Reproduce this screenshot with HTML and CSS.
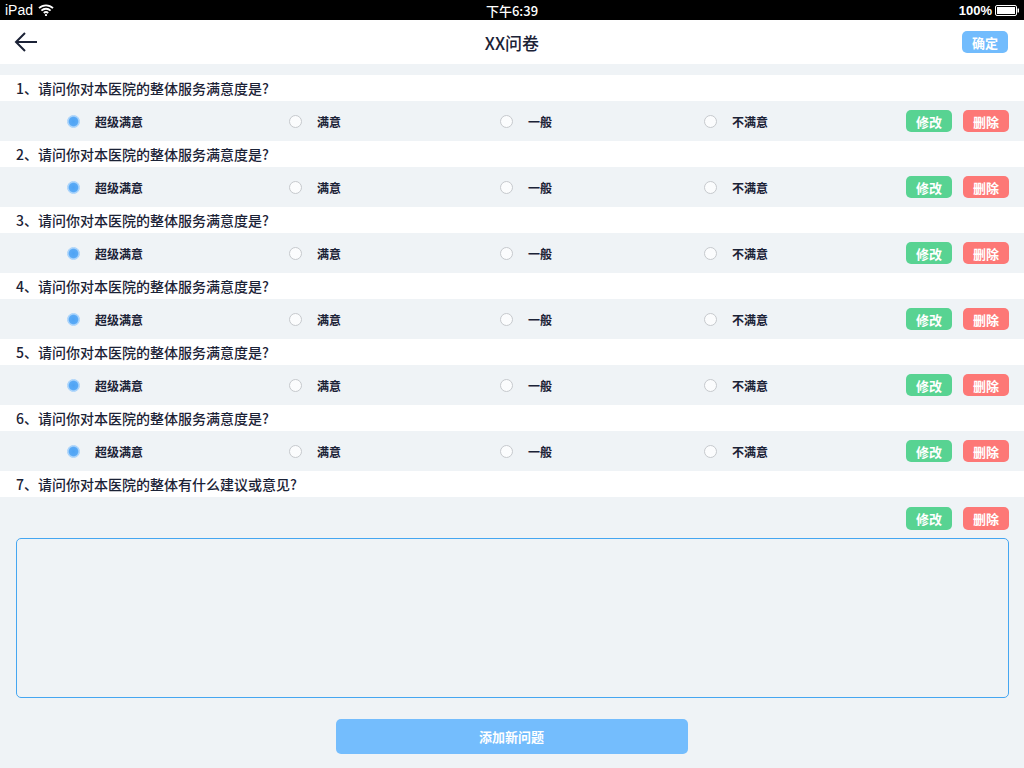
FILE: index.html
```html
<!DOCTYPE html>
<html lang="zh-CN">
<head>
    <meta charset="UTF-8">
    <meta name="viewport" content="width=device-width, initial-scale=1.0">
    <title>XX问卷</title>
    <link rel="stylesheet" href="styles.css">
</head>
<body>
    <div class="status-bar">
        <div class="status-left">
            <span>iPad</span>
            <svg class="wifi" width="16" height="12" viewBox="0 0 16 12">
                <path d="M1 4.2 A10 10 0 0 1 15 4.2" fill="none" stroke="#fff" stroke-width="1.8"/>
                <path d="M3.4 6.6 A6.6 6.6 0 0 1 12.6 6.6" fill="none" stroke="#fff" stroke-width="1.8"/>
                <path d="M5.8 9 A3.2 3.2 0 0 1 10.2 9" fill="none" stroke="#fff" stroke-width="1.8"/>
                <circle cx="8" cy="11" r="1.1" fill="#fff"/>
            </svg>
        </div>
        <div class="status-time">下午6:39</div>
        <div class="status-right">
            <span>100%</span>
            <svg width="25" height="11" viewBox="0 0 25 11">
                <rect x="0.5" y="0.5" width="21" height="10" rx="1.5" fill="none" stroke="#fff"/>
                <rect x="2" y="2" width="18" height="7" fill="#fff"/>
                <rect x="22.5" y="3.5" width="1.5" height="4" fill="#fff"/>
            </svg>
        </div>
    </div>

    <div class="nav-bar">
        <div class="nav-left">
            <svg width="24" height="20" viewBox="0 0 24 20">
                <path d="M23 10 H2 M11 1 L2 10 L11 19" fill="none" stroke="#1b2236" stroke-width="2"/>
            </svg>
        </div>
        <div class="nav-title">XX问卷</div>
        <div class="nav-right">
            <button class="btn btn-blue">确定</button>
        </div>
    </div>

    <div class="spacer"></div>

    <div id="questions"></div>

    <div class="q-title">7、请问你对本医院的整体有什么建议或意见?</div>
    <div class="q-body">
        <div class="q-actions">
            <button class="btn btn-green">修改</button>
            <button class="btn btn-red">删除</button>
        </div>
        <textarea class="answer"></textarea>
        <div class="add-wrap">
            <button class="add-btn">添加新问题</button>
        </div>
    </div>

    <script>
        // 生成 1-6 题
        const options = ['超级满意', '满意', '一般', '不满意'];
        const list = document.getElementById('questions');
        let html = '';
        for (let i = 1; i <= 6; i++) {
            html += `<div class="q-title">${i}、请问你对本医院的整体服务满意度是?</div>`;
            html += '<div class="q-options">';
            options.forEach((label, idx) => {
                html += `<div class="option"><span class="radio ${idx === 0 ? 'checked' : ''}"></span><span class="label">${label}</span></div>`;
            });
            html += '<div class="q-actions"><button class="btn btn-green">修改</button><button class="btn btn-red">删除</button></div>';
            html += '</div>';
        }
        list.innerHTML = html;
    </script>
</body>
</html>
```

FILE: styles.css
```css
body {
    margin: 0;
    width: 1024px;
    height: 768px;
    overflow: hidden;
    background: #eff3f6;
    font-family: "Noto Sans CJK SC", "Noto Sans", sans-serif;
    color: #1b2236;
}

button {
    font-family: inherit;
    border: none;
    cursor: pointer;
}

/* 状态栏 */
.status-bar {
    height: 20px;
    background: #000;
    color: #fff;
    display: grid;
    grid-template-columns: 1fr auto 1fr;
    align-items: center;
    font-family: "Liberation Sans", "Noto Sans CJK SC", sans-serif;
    font-size: 14px;
}

.status-left {
    display: flex;
    align-items: center;
    gap: 5px;
    padding-left: 5px;
}

.status-time {
    font-family: "Noto Sans CJK SC", sans-serif;
    font-size: 13px;
    font-weight: 500;
}

.status-right {
    display: flex;
    justify-content: flex-end;
    align-items: center;
    gap: 3px;
    padding-right: 4px;
    font-size: 13px;
    font-weight: bold;
}

/* 导航栏 */
.nav-bar {
    height: 44px;
    background: #fff;
    display: grid;
    grid-template-columns: 1fr auto 1fr;
    align-items: center;
}

.nav-left {
    padding-left: 14px;
    display: flex;
}

.nav-title {
    font-size: 17px;
    font-weight: 500;
}

.nav-right {
    display: flex;
    justify-content: flex-end;
    padding-right: 16px;
}

.spacer {
    height: 11px;
}

/* 按钮 */
.btn {
    width: 46px;
    height: 22px;
    border-radius: 5px;
    color: #fff;
    font-size: 13px;
    font-weight: bold;
    padding: 0;
}

.btn-blue {
    background: #72bcfd;
}

.btn-green {
    background: #58d392;
}

.btn-red {
    background: #fd7876;
}

/* 问题 */
.q-title {
    height: 26px;
    background: #fff;
    padding-left: 16px;
    display: flex;
    align-items: center;
    font-size: 14px;
    font-weight: 500;
}

.q-options {
    height: 40px;
    display: flex;
    align-items: center;
    padding-left: 67px;
}

.option {
    display: flex;
    align-items: center;
    gap: 15px;
    font-size: 12px;
    font-weight: bold;
}

.option:nth-child(1) { width: 222px; }
.option:nth-child(2) { width: 211px; }
.option:nth-child(3) { width: 204px; }

.radio {
    width: 11px;
    height: 11px;
    border-radius: 50%;
    border: 1px solid #c6c9cd;
    background: #fbfcfd;
}

.radio.checked {
    border-color: #a7d2fb;
    background: radial-gradient(circle, #4ea3f4 0, #5aaaf6 55%, #b6dafc 70%);
}

.q-actions {
    margin-left: auto;
    display: flex;
    gap: 11px;
    padding-right: 15px;
}

.q-body .q-actions {
    justify-content: flex-end;
    padding-top: 10px;
    height: 23px;
}

.q-body .btn {
    height: 23px;
}

.answer {
    display: block;
    box-sizing: border-box;
    width: 993px;
    height: 160px;
    margin: 8px 0 0 16px;
    border: 1px solid #45a6f1;
    border-radius: 5px;
    background: #eff3f6;
    resize: none;
    outline: none;
}

.add-wrap {
    display: flex;
    justify-content: center;
    padding-top: 21px;
}

.add-btn {
    width: 352px;
    height: 35px;
    margin-left: -1px;
    border-radius: 5px;
    background: #74bdfd;
    color: #fff;
    font-size: 13px;
    font-weight: bold;
}
```
